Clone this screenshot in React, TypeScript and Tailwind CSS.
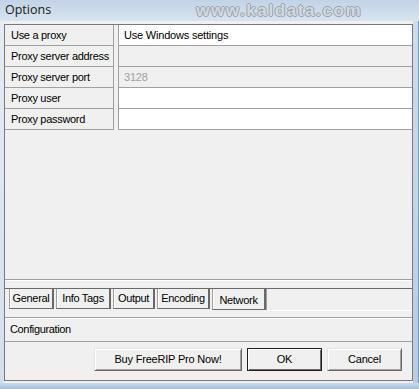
import React from "react";

const font = { fontFamily: '"Liberation Sans", Arial, sans-serif' };

const rows = [
	{ label: "Use a proxy", value: "Use Windows settings", bg: "bg-white", muted: false },
	{ label: "Proxy server address", value: "", bg: "bg-[#f0f0f0]", muted: false },
	{ label: "Proxy server port", value: "3128", bg: "bg-[#f0f0f0]", muted: true },
	{ label: "Proxy user", value: "", bg: "bg-white", muted: false },
	{ label: "Proxy password", value: "", bg: "bg-white", muted: false },
];

const tabs = [
	{ name: "General", w: "w-[45px]" },
	{ name: "Info Tags", w: "w-[55px]" },
	{ name: "Output", w: "w-[42px]" },
	{ name: "Encoding", w: "w-[53px]" },
];

function Button({ children, w, isDefault }: { children: React.ReactNode; w: string; isDefault?: boolean }) {
	return (
		<div
			className={`${w} h-[23px] flex items-center justify-center bg-[#f0f0f0] text-[11px] tracking-[-0.2px] text-black ${
				isDefault
					? "border border-[#202020] shadow-[inset_1px_1px_0_#ffffff,inset_-1px_-1px_0_#696969]"
					: "border border-t-[#e3e3e3] border-l-[#e3e3e3] border-r-[#696969] border-b-[#696969] shadow-[inset_1px_1px_0_#ffffff,inset_-1px_-1px_0_#a0a0a0]"
			}`}
		>
			{children}
		</div>
	);
}

export default function App() {
	return (
		<div className="w-[419px] h-[389px] flex flex-col bg-[#c6d7e9] overflow-hidden" style={font}>
			{/* title bar */}
			<div className="h-[21px] flex items-center bg-gradient-to-b from-[#c2d3e6] to-[#d8e4ef]">
				<span className="pl-[5px] text-[12.5px] text-[#1a1a1a]" style={{ fontFamily: '"Open Sans", "Noto Sans", sans-serif' }}>
					Options
				</span>
				<span
					className="ml-[145px] text-[17px] font-bold tracking-[1.6px] text-[#d3d9df] leading-none"
					style={{
						textShadow:
							"1px 0 0 #98a3af, -1px 0 0 #98a3af, 0 1px 0 #98a3af, 0 -1px 0 #98a3af",
					}}
				>
					www.kaldata.com
				</span>
			</div>

			<div className="flex flex-1">
				<div className="w-[4px] bg-gradient-to-b from-[#e6ecf2] to-[#d4dfea]" />

				{/* client */}
				<div className="w-[409px] bg-[#f0f0f0] pt-[3px] pb-[2px] flex flex-col">
					<div className="flex flex-col flex-1 border border-[#7a7a7a] text-[11px] text-black">
						{/* property grid */}
						{rows.map((r) => (
							<div key={r.label} className="flex h-[21px]">
								<div className="w-[108px] bg-[#f0f0f0] border-b border-[#a0a0a0] pl-[6px] leading-[20px] tracking-[-0.3px] whitespace-nowrap">
									{r.label}
								</div>
								<div className="w-[6px] bg-[#f0f0f0] border-x border-[#a0a0a0]" />
								<div className={`flex-1 ${r.bg} border-b border-[#a0a0a0] pl-[5px] leading-[20px] tracking-[-0.2px] ${r.muted ? "text-[#a0a0a0]" : ""}`}>
									{r.value}
								</div>
							</div>
						))}
						<div className="h-[150px] border-b border-[#a0a0a0]" />
						<div className="h-[9px] border-b border-[#696969] shadow-[inset_0_1px_0_#ffffff]" />

						{/* tabs */}
						<div className="h-[22px] flex pl-[4px] gap-[2px]">
							{tabs.map((t) => (
								<div
									key={t.name}
									className={`${t.w} h-[20px] flex items-center justify-center tracking-[-0.3px] border-l border-l-[#a0a0a0] border-r-2 border-r-[#696969] border-b border-b-[#696969] shadow-[inset_1px_0_0_#ffffff]`}
								>
									{t.name}
								</div>
							))}
							<div className="w-[54px] h-[21px] flex items-center justify-center pt-[2px] tracking-[-0.3px] border-l border-l-[#a0a0a0] border-r-2 border-r-[#696969] border-b border-b-[#696969] shadow-[inset_1px_0_0_#ffffff]">
								Network
							</div>
							<div className="flex-1 -ml-[2px] border-l border-l-[#a0a0a0] border-b border-b-[#ffffff]" />
						</div>

						<div className="h-[6px]" />

						{/* description */}
						<div className="h-[25px] border-y border-[#a0a0a0] flex items-center pl-[5px] tracking-[-0.35px] shadow-[inset_0_1px_0_#ffffff]">
							Configuration
						</div>

						{/* buttons */}
						<div className="flex-1 flex justify-end items-start pt-[6px] pr-[10px] gap-[5px]">
							<Button w="w-[148px]">Buy FreeRIP Pro Now!</Button>
							<Button w="w-[75px]" isDefault>
								OK
							</Button>
							<Button w="w-[75px]">Cancel</Button>
						</div>
					</div>
				</div>

				<div className="flex-1 flex">
					<div className="flex-1 bg-gradient-to-b from-[#cfdcea] to-[#b7cce2]" />
					<div className="w-[1px] bg-[#3ab0e6]" />
				</div>
			</div>

			<div className="h-[6px] bg-gradient-to-b from-[#c9d9ea] to-[#a9c1da]" />
		</div>
	);
}
